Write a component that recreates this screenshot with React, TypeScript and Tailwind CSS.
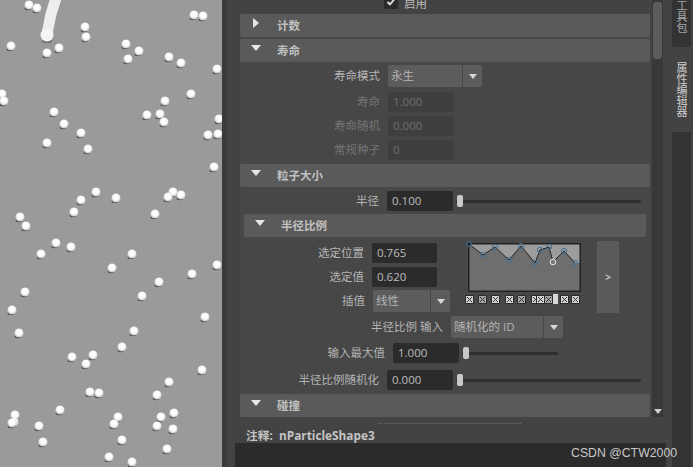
const particles: [number, number][] = [
  [29, 5], [37, 8], [194, 15], [203, 16], [85, 27], [86, 37], [11, 46], [47, 53], [59, 48], [126, 44],
  [139, 51], [128, 59], [169, 57], [181, 63], [217, 69], [191, 94], [165, 101], [147, 115], [160, 114],
  [164, 122], [219, 119], [208, 135], [218, 134], [2, 94], [4, 101], [54, 112], [64, 124], [81, 133],
  [47, 143], [88, 149], [214, 167], [96, 192], [81, 200], [74, 212], [116, 198], [173, 192], [168, 197],
  [181, 195], [155, 214], [20, 217], [26, 226], [56, 243], [71, 247], [41, 254], [132, 254], [112, 268],
  [217, 265], [192, 274], [159, 282], [25, 292], [142, 296], [12, 310], [205, 317], [19, 333], [134, 331],
  [122, 347], [93, 355], [72, 357], [86, 364], [202, 370], [169, 382], [90, 392], [99, 393], [157, 395],
  [60, 410], [15, 415], [14, 422], [12, 423], [39, 426], [118, 417], [114, 424], [161, 417], [174, 413],
  [157, 426], [173, 429], [43, 442], [122, 440], [167, 449], [109, 457], [132, 462],
];

const rampPoints: [number, number][] = [
  [1, 0], [15, 11], [27, 3], [41, 16], [53, 2], [67, 19], [72, 6], [81, 3], [85, 18], [96, 7], [107, 19],
];

const markerXs = [469, 482, 495, 509, 521, 535, 540, 548, 564, 575];

function Viewport() {
  return (
    <svg width="222" height="467" className="shrink-0 bg-[#9a9a9a]">
      <defs>
        <radialGradient id="ball" cx="50%" cy="42%" r="55%">
          <stop offset="0%" stopColor="#ffffff" />
          <stop offset="60%" stopColor="#fbfbfb" />
          <stop offset="100%" stopColor="#bcbcbc" />
        </radialGradient>
      </defs>
      <ellipse cx="47" cy="41" rx="5" ry="2" fill="#555" opacity="0.6" />
      <path d="M56 -2 L51 14 L47 34" stroke="#eeeeee" strokeWidth="11" fill="none" strokeLinecap="round" />
      <circle cx="47" cy="35" r="6.5" fill="#f5f5f5" />
      {particles.map(([x, y], i) => (
        <g key={i}>
          <ellipse cx={x - 1} cy={y + 3.6} rx="3.4" ry="1.6" fill="#2a2a2a" opacity="0.7" />
          <circle cx={x} cy={y} r="4.6" fill="url(#ball)" />
        </g>
      ))}
    </svg>
  );
}

function Header({ title, open = true, sub = false }: { title: string; open?: boolean; sub?: boolean }) {
  return (
    <div className={`flex h-[23px] shrink-0 items-center rounded-[2px] bg-[#5a5a5a] ${sub ? 'mx-1' : ''}`}>
      <span className="flex w-[37px] justify-center pl-[2px] pr-[8px]">
        {open ? (
          <span className="mb-[5px] h-0 w-0 border-x-[5px] border-t-[6px] border-x-transparent border-t-[#e6e6e6]" />
        ) : (
          <span className="mb-[5px] h-0 w-0 border-y-[5px] border-l-[6px] border-y-transparent border-l-[#e6e6e6]" />
        )}
      </span>
      <span className="text-[11.5px] font-bold text-[#c0c0c0]">{title}</span>
    </div>
  );
}

function Arrow() {
  return <span className="h-0 w-0 border-x-[4px] border-t-[5px] border-x-transparent border-t-[#d8d8d8]" />;
}

function Combo({ value, w, arrow = 19 }: { value: string; w: number; arrow?: number }) {
  return (
    <div className="flex h-[22px] gap-px">
      <div className="flex items-center rounded-l-[2px] bg-[#5c5c5c] pl-[3px] text-[11.5px] text-[#b4b4b4]" style={{ width: w }}>
        {value}
      </div>
      <div className="flex items-center justify-center rounded-r-[2px] bg-[#5c5c5c]" style={{ width: arrow }}>
        <Arrow />
      </div>
    </div>
  );
}

function Field({ value, disabled = false, w = 66 }: { value: string; disabled?: boolean; w?: number }) {
  return (
    <div
      className={`flex h-[20px] items-center rounded-[2px] pl-[5px] text-[11.5px] ${
        disabled ? 'bg-[#3f3f3f] text-[#727272]' : 'bg-[#2b2b2b] text-[#bdbdbd]'
      }`}
      style={{ width: w }}
    >
      {value}
    </div>
  );
}

function Label({ text, w, disabled = false }: { text: string; w: number; disabled?: boolean }) {
  return (
    <span
      className={`shrink-0 pr-[8px] text-right text-[11.5px] ${disabled ? 'text-[#757575]' : 'text-[#b4b4b4]'}`}
      style={{ width: w }}
    >
      {text}
    </span>
  );
}

function Slider({ w }: { w: number }) {
  return (
    <div className="relative ml-[3px] flex h-[14px] items-center" style={{ width: w }}>
      <div className="h-[3px] w-full rounded-full bg-[#2e2e2e]" />
      <div className="absolute left-[1px] top-[1px] h-[12px] w-[6px] rounded-[2px] bg-[#c9c9c9]" />
    </div>
  );
}

function Ramp() {
  const line = rampPoints.map(([x, y]) => `${x},${y + 1}`).join(' ');
  return (
    <svg width="113" height="49" className="block overflow-visible">
      <rect x="0.75" y="0.75" width="111.5" height="47.5" fill="#6e6e6e" />
      <polygon points={`${line} 112,20 112,1 1,1`} fill="#9c9c9c" />
      <rect x="0.75" y="0.75" width="111.5" height="47.5" fill="none" stroke="#222" strokeWidth="1.5" />
      <polyline points={line} fill="none" stroke="#222" strokeWidth="1" />
      {rampPoints.map(([x, y], i) =>
        i === 8 ? (
          <circle key={i} cx={x} cy={y + 1} r="2.8" fill="#777" stroke="#e6e6e6" strokeWidth="1" />
        ) : (
          <circle key={i} cx={x} cy={y + 1} r="2.6" fill="none" stroke="#3f6f96" strokeWidth="1" />
        ),
      )}
    </svg>
  );
}

function RampMarkers() {
  return (
    <div className="relative mt-[3px] h-[9px] w-[120px]">
      {markerXs.map((x, i) => (
        <svg key={x} width="9" height="9" className="absolute top-0" style={{ left: x - 472 }}>
          <rect width="9" height="9" rx="1" fill="#2a2a2a" />
          <rect x="1" y="1" width="7" height="7" fill={i % 3 === 1 ? '#a8a8a8' : '#d4d4d4'} />
          <path d="M2 2 L7 7 M7 2 L2 7" stroke="#333" strokeWidth="1" />
        </svg>
      ))}
      <div className="absolute left-[85px] top-[-1px] h-[10px] w-[5px] bg-[#d8d8d8]" />
    </div>
  );
}

function Inspector() {
  return (
    <div className="flex min-w-0 flex-1 flex-col overflow-hidden bg-[#434343]">
      <div className="flex h-[443px] shrink-0 pl-[13px]">
        <div className="flex w-[410px] shrink-0 flex-col bg-[#474747]">
          <div className="flex h-[14px] shrink-0 items-start bg-[#434343] pl-[144px]">
            <span className="mt-[-5px] flex h-[14px] w-[14px] items-center justify-center rounded-[2px] bg-[#2b2b2b]">
              <svg width="10" height="10" viewBox="0 0 10 10">
                <path d="M1.5 5 L4 7.5 L8.5 2" stroke="#e4e4e4" strokeWidth="1.8" fill="none" />
              </svg>
            </span>
            <span className="ml-[6px] text-[11.5px] leading-[8px] text-[#bdbdbd]">启用</span>
          </div>

          <Header title="计数" open={false} />
          <div className="h-[2px] shrink-0" />
          <Header title="寿命" />

          <div className="mt-[3px] flex items-center">
            <Label text="寿命模式" w={148} />
            <Combo value="永生" w={74} />
          </div>
          <div className="mt-[5px] flex items-center">
            <Label text="寿命" w={148} disabled />
            <Field value="1.000" disabled />
          </div>
          <div className="mt-[4px] flex items-center">
            <Label text="寿命随机" w={148} disabled />
            <Field value="0.000" disabled />
          </div>
          <div className="mt-[4px] flex items-center">
            <Label text="常规种子" w={148} disabled />
            <Field value="0" disabled />
          </div>

          <div className="mt-[4px]">
            <Header title="粒子大小" />
          </div>
          <div className="mt-[4px] flex items-center">
            <Label text="半径" w={147} />
            <Field value="0.100" />
            <Slider w={185} />
          </div>
          <div className="mt-[3px]">
            <Header title="半径比例" sub />
          </div>

          <div className="mt-[6px] flex h-[73px] shrink-0 items-start">
            <div className="flex w-[197px] shrink-0 flex-col gap-[4px]">
              <div className="flex items-center">
                <Label text="选定位置" w={132} />
                <Field value="0.765" />
              </div>
              <div className="flex items-center">
                <Label text="选定值" w={132} />
                <Field value="0.620" />
              </div>
              <div className="mt-[-1px] flex items-center">
                <Label text="插值" w={133} />
                <Combo value="线性" w={57} />
              </div>
            </div>
            <div className="ml-[31px] w-[113px] shrink-0">
              <Ramp />
              <RampMarkers />
            </div>
            <div className="ml-[16px] mt-[-2px] flex h-[72px] w-[22px] items-center justify-center bg-[#5a5a5a] text-[10px] font-bold text-[#c4c4c4]">
              &gt;
            </div>
          </div>

          <div className="flex items-center">
            <Label text="半径比例 输入" w={211} />
            <Combo value="随机化的 ID" w={92} />
          </div>
          <div className="mt-[5px] flex items-center">
            <Label text="输入最大值" w={153} />
            <Field value="1.000" />
            <Slider w={96} />
          </div>
          <div className="mt-[7px] flex items-center">
            <Label text="半径比例随机化" w={147} />
            <Field value="0.000" />
            <Slider w={185} />
          </div>
          <div className="mt-[4px]">
            <Header title="碰撞" />
          </div>

          <div className="flex-1 bg-[#434343]">
            <div className="ml-[138px] mt-[6px] w-[143px] border-t border-dotted border-[#6e6e6e]" />
            <div className="ml-[6px] mt-[3px] text-[11.8px] font-bold leading-[16px] text-[#c4c4c4]">
              注释:&nbsp;&nbsp;nParticleShape3
            </div>
          </div>
        </div>

        <div className="ml-[2px] flex h-[417px] w-[11px] shrink-0 flex-col items-center bg-[#383838]">
          <div className="mt-[2px] h-[57px] w-[9px] rounded-[3px] bg-[#5c5c5c]" />
          <div className="mb-[3px] mt-auto">
            <span className="block h-0 w-0 border-x-[4px] border-t-[5px] border-x-transparent border-t-[#d0d0d0]" />
          </div>
        </div>
      </div>
      <div className="ml-[8px] mr-[5px] flex-1 bg-[#2b2b2b]" />
    </div>
  );
}

function TabStrip() {
  return (
    <div className="flex w-[21px] shrink-0 flex-col bg-[#434343] pr-[2px] font-['Noto_Sans_CJK_SC',sans-serif]">
      <div className="flex h-[47px] items-end justify-center rounded-b-[2px] bg-[#333333] pb-[14px]">
        <span className="text-[11px] leading-none text-[#a8a8a8] [writing-mode:vertical-rl]">工具包</span>
      </div>
      <div className="flex h-[85px] items-center justify-center">
        <span className="text-[11px] leading-none text-[#d0d0d0] [writing-mode:vertical-rl]">属性编辑器</span>
      </div>
      <div className="flex-1 bg-[#333333]" />
    </div>
  );
}

export default function App() {
  return (
    <div className="relative flex h-[467px] w-[693px] overflow-hidden bg-[#434343] font-['Open_Sans','Noto_Sans_CJK_SC',sans-serif]">
      <Viewport />
      <div className="w-[5px] shrink-0 bg-[#3a3a3a]" />
      <Inspector />
      <div className="w-[1px] shrink-0 bg-[#434343]" />
      <TabStrip />
      <span className="absolute left-[571px] top-[444px] font-['Liberation_Sans',sans-serif] text-[12.3px] text-[#c8c8c8]">
        CSDN @CTW2000
      </span>
    </div>
  );
}
